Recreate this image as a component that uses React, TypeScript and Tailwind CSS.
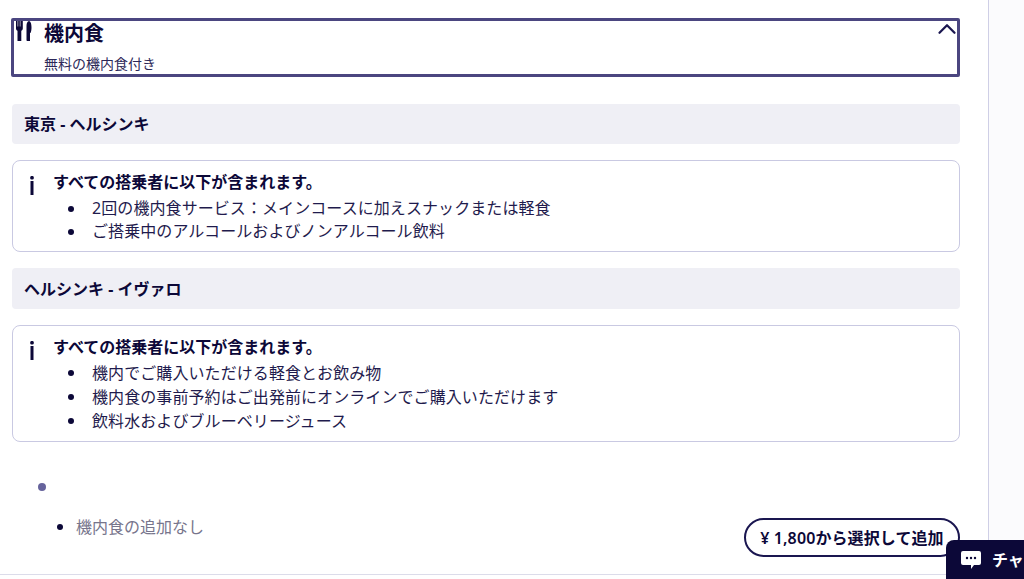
import { ChevronUp } from "lucide-react";

const font = "font-['Noto_Sans','Noto_Sans_CJK_JP',sans-serif]";

function SectionTitle({ title, height }: { title: string; height: string }) {
  return (
    <div className={`${height} flex items-center px-3 bg-[#efeff5] rounded text-base font-bold text-[#0c0838] leading-none`}>
      {title}
    </div>
  );
}

function InfoBox({ items, height, list }: { items: string[]; height: string; list: string }) {
  return (
    <div className={`${height} flex border border-[#c9c9e2] rounded-lg pl-[17px] pt-[11px]`}>
      <svg viewBox="0 0 4 19" className="w-1 h-[19px] mt-[4px] shrink-0 text-[#0c0838]" fill="currentColor">
        <rect x="0.3" y="0" width="3.4" height="3.4" rx="1.2" />
        <rect x="0.5" y="5" width="3" height="14" />
      </svg>
      <div className="flex-1 ml-[19px]">
        <p className="text-base leading-[20px] font-bold text-[#0c0838]">すべての搭乗者に以下が含まれます。</p>
        <ul className={`${list} text-base tracking-[0.08px] text-[#1f1b4d]`}>
          {items.map((item) => (
            <li key={item} className="flex items-center">
              <span className="w-[6px] h-[6px] rounded-full bg-[#0c0838] ml-[15px] mr-[18px] shrink-0" />
              {item}
            </li>
          ))}
        </ul>
      </div>
    </div>
  );
}

export default function App() {
  return (
    <div className={`${font} relative w-[1024px] h-[579px] overflow-hidden bg-white flex`}>
      <div className="w-[988px] h-[575px] border-b border-[#dcdcea] pt-[18px] pl-[11px] pr-7 shrink-0 flex flex-col">
        <div className="h-[59px] border-[3px] border-[#4b4680] rounded-[2px] flex shrink-0 relative">
          <svg viewBox="0 0 16 20" className="w-4 h-5 ml-[2px] shrink-0 text-[#0c0838]" fill="currentColor">
            <path d="M0 0h1.600v5.500h.6V0h1.600v5.500h.6V0H6.800v7.500c0 1.200-.8 2-1.500 2.300V20H1.500V9.800C.8 9.500 0 8.700 0 7.500z" />
            <path d="M13 0c1.300.3 2.500 2 2.500 6.500 0 2-.3 4-1 5.500H14v8h-2.500c-.6 0-1-.4-1-1V5C10.500 2 11.500.5 13 0z" />
          </svg>
          <div className="ml-[12px]">
            <h2 className="text-xl leading-[26px] font-semibold text-[#0c0838]">機内食</h2>
            <p className="text-sm leading-[20px] text-[#2c2858] mt-[7px]">無料の機内食付き</p>
          </div>
          <ChevronUp className="absolute right-[-5px] top-[-7px] w-[30px] h-[30px] text-[#1a1650]" strokeWidth={1.8} />
        </div>

        <div className="ml-[1px] mt-[27px] flex flex-col">
          <SectionTitle title="東京 - ヘルシンキ" height="h-10" />
          <div className="mt-4">
            <InfoBox
              height="h-[92px]"
              list="mt-[5px] leading-[23px]"
              items={["2回の機内食サービス：メインコースに加えスナックまたは軽食", "ご搭乗中のアルコールおよびノンアルコール飲料"]}
            />
          </div>
          <div className="mt-4">
            <SectionTitle title="ヘルシンキ - イヴァロ" height="h-[41px]" />
          </div>
          <div className="mt-4">
            <InfoBox
              height="h-[117px]"
              list="mt-1 leading-[24px]"
              items={[
                "機内でご購入いただける軽食とお飲み物",
                "機内食の事前予約はご出発前にオンラインでご購入いただけます",
                "飲料水およびブルーベリージュース",
              ]}
            />
          </div>
          <div className="mt-[41px] ml-[26px] w-2 h-2 rounded-full bg-[#66639c]" />
          <div className="flex justify-between items-start">
            <div className="flex items-center ml-[45px] mt-[24px] text-base leading-[24px] text-[#77758c]">
              <span className="w-[6px] h-[6px] rounded-full bg-[#0c0838] mr-[13px]" />
              機内食の追加なし
            </div>
            <button className="mt-[27px] h-[39px] w-[216px] rounded-full border-2 border-[#1a1650] text-base leading-none font-semibold tracking-[0.1px] text-[#0c0838] text-center">
              ¥ 1,800から選択して追加
            </button>
          </div>
        </div>
      </div>
      <div className="w-[36px] h-[579px] border-l border-[#cfcfe6] bg-[#fbfbfd] shrink-0" />
      <div className="absolute left-[946px] top-[540px] w-[90px] h-[48px] bg-[#0c0838] rounded-lg flex items-start pl-[15px] pt-[11px] text-white">
        <svg viewBox="0 0 20 18" className="w-5 h-[18px] shrink-0" fill="currentColor">
          <path d="M2 0h16a2 2 0 0 1 2 2v10a2 2 0 0 1-2 2h-5l-3 4v-4H2a2 2 0 0 1-2-2V2a2 2 0 0 1 2-2z" />
          <circle cx="6" cy="7" r="1.2" fill="#0c0838" />
          <circle cx="10" cy="7" r="1.2" fill="#0c0838" />
          <circle cx="14" cy="7" r="1.2" fill="#0c0838" />
        </svg>
        <span className="ml-[11px] text-base font-bold leading-[18px] whitespace-nowrap">チャット</span>
      </div>
    </div>
  );
}
